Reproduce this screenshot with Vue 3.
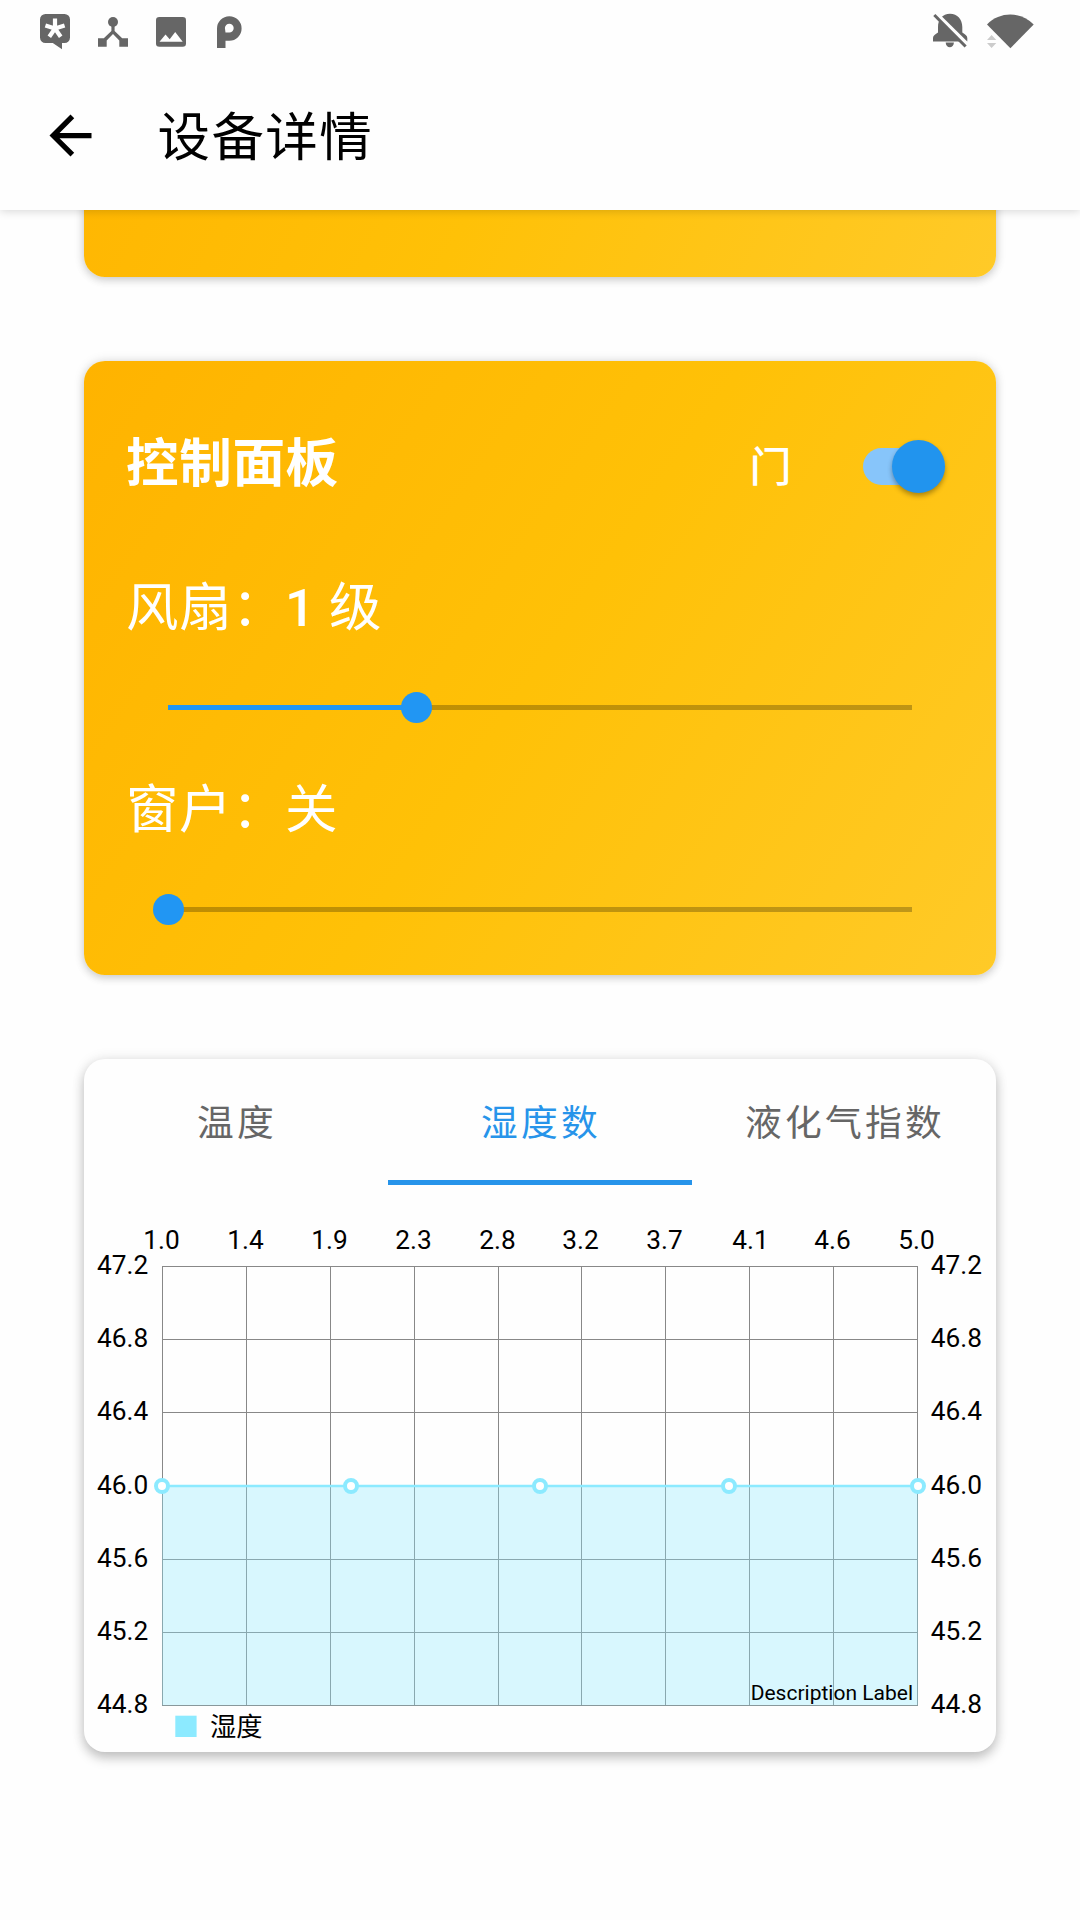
<script setup>
import { ref } from 'vue'

const tabs = ['温度', '湿度数', '液化气指数']
const activeTab = ref(1)

const sliders = [
  { name: '风扇：', num: '1', value: '级', percent: 33.333 },
  { name: '窗户：', num: '', value: '关', percent: 0 },
]

const xLabels = ['1.0', '1.4', '1.9', '2.3', '2.8', '3.2', '3.7', '4.1', '4.6', '5.0']
const yLabels = ['47.2', '46.8', '46.4', '46.0', '45.6', '45.2', '44.8']

const plot = { left: 78, top: 81, width: 756, height: 439 }
const gridX = (i) => plot.left + 84 * i + (i > 4 ? -0.5 : 0.5)
const gridY = (i) => plot.top + Math.round((plot.height / 6) * i) + 0.5
const labelX = (i) => gridX(i) - 1 + (xLabels[i] === '4.1' ? 2 : 0)
const points = [0, 1, 2, 3, 4].map((i) => plot.left + 189 * i)
</script>

<template>
  <div class="screen">
    <header class="header">
      <div class="status">
        <div class="status-left">
          <svg width="30" height="36" viewBox="40 14 30 36">
            <path d="M45.5 14h19a5.5 5.5 0 0 1 5.500 5.500v18a5.500 5.500 0 0 1-5.500 5.500H62v6.300L52.800 43H45.500a5.500 5.500 0 0 1-5.500-5.500v-18A5.500 5.500 0 0 1 45.500 14z" />
            <path class="cut" d="M55 28.500V18.500M55 28.500l9.600-3.100M55 28.500l5.700 8.200M55 28.500l-5.700 8.200M55 28.500l-9.600-3.100" />
          </svg>
          <svg width="30" height="30" viewBox="98 16.700 30 30">
            <circle cx="113" cy="21.700" r="5" />
            <path d="M98 38h5.800l7.600-7.300V25h3.200v5.700l7.600 7.300h5.800v8.500h-8.700v-6.200L113 33.800l-6.300 6.500v6.200H98z" />
          </svg>
          <svg width="30" height="30" viewBox="156 16.700 30 30">
            <rect x="156" y="16.700" width="30" height="29.700" rx="3.300" />
            <path fill="#fefefe" d="M159.500 41.500l6-7.300 4.200 4.700 5.500-7.200 7.500 9.800z" />
          </svg>
          <svg width="25" height="32" viewBox="216.500 16 25 32">
            <path fill-rule="evenodd" d="M216.500 48V28.400a12.300 12.300 0 1 1 12.300 12.400H225V48zM225 32.500h3.800a4.400 4.400 0 1 0-4.400-4.400z" />
          </svg>
        </div>
        <div class="status-right">
          <svg width="36" height="36" viewBox="932 13 36 36">
            <path d="M938 27c0-7.500 4.500-13.300 12-13.300S962.300 19.500 962.300 27v5.500c2.500 1.500 5 3 5 5.500v3.500H933V38c0-2.500 2.500-4 5-5.500zM945.700 42.500h8.200c0 6.300-8.200 6.300-8.200 0z" />
            <path stroke="#fefefe" stroke-width="4" d="M934 11.500l35 34.500" />
            <path stroke="#666" stroke-width="3" d="M934.300 15l31.300 31.500" />
          </svg>
          <svg width="47" height="35" viewBox="987 14 47 35">
            <path d="M1010.400 48.300L987 24.500c13-13.200 33.500-13.200 46.700 0z" />
            <path fill="#ccc" d="M987 40l4.600-5 4.700 5zM987 43h9.300l-4.700 5z" />
          </svg>
        </div>
      </div>
      <div class="appbar">
        <svg class="back" width="63" height="63" viewBox="0 0 24 24">
          <path d="M20 11H7.830l5.590-5.590L12 4l-8 8 8 8 1.410-1.410L7.830 13H20v-2z" />
        </svg>
        <h1 class="title">设备详情</h1>
      </div>
    </header>

    <main class="content">
      <section class="card amber previous"></section>

      <section class="card amber panel">
        <div class="panel-head">
          <h2 class="panel-title">控制面板</h2>
          <span class="door">门</span>
          <span class="switch"><span class="knob"></span></span>
        </div>
        <div v-for="s in sliders" :key="s.name" class="control">
          <div class="control-label">{{ s.name }}<b v-if="s.num">{{ s.num + ' ' }}</b>{{ s.value }}</div>
          <div class="slider">
            <span class="fill" :style="{ width: s.percent + '%' }"></span>
            <span class="thumb" :style="{ left: s.percent + '%' }"></span>
          </div>
        </div>
      </section>

      <section class="card chart-card">
        <nav class="tabs">
          <div
            v-for="(t, i) in tabs"
            :key="t"
            class="tab"
            :class="{ active: i === activeTab }"
            @click="activeTab = i"
          >{{ t }}</div>
        </nav>
        <svg class="chart" width="912" height="567" viewBox="0 0 912 567">
          <g stroke="#888" stroke-width="1">
            <line v-for="(l, i) in xLabels" :key="'x' + l" :x1="gridX(i)" :x2="gridX(i)" y1="81" y2="521" />
            <line v-for="(l, i) in yLabels" :key="'y' + l" x1="78" x2="834" :y1="gridY(i)" :y2="gridY(i)" />
          </g>
          <rect x="78" y="301" width="756" height="219.500" fill="#8ceaff" fill-opacity="0.333" />
          <line x1="78" x2="834" y1="301" y2="301" stroke="#8ceaff" stroke-width="2.600" />
          <circle v-for="p in points" :key="p" :cx="p" cy="301" r="6" fill="#fff" stroke="#8ceaff" stroke-width="4" />
          <g class="axis">
            <text v-for="(l, i) in xLabels" :key="'tx' + l" :x="labelX(i)" y="63.500" text-anchor="middle">{{ l }}</text>
            <text v-for="(l, i) in yLabels" :key="'tl' + l" x="64.300" :y="gridY(i) + 7.500" text-anchor="end">{{ l }}</text>
            <text v-for="(l, i) in yLabels" :key="'tr' + l" x="846.800" :y="gridY(i) + 7.500">{{ l }}</text>
            <text class="desc" x="829" y="515" text-anchor="end">Description Label</text>
            <text x="126" y="551">湿度</text>
          </g>
          <rect x="91.300" y="530.700" width="21.300" height="21.300" fill="#8ceaff" />
        </svg>
      </section>
    </main>
  </div>
</template>

<style>
body {
  margin: 0;
  background: #fefefe;
}
</style>

<style scoped>
.screen {
  width: 1080px;
  height: 1920px;
  overflow: hidden;
  display: flex;
  flex-direction: column;
  background: #fefefe;
  font-family: Roboto, "Noto Sans CJK SC", sans-serif;
}
.header {
  position: relative;
  z-index: 1;
  flex: none;
  height: 210px;
  background: #fefefe;
  box-shadow: 0 1px 9px rgba(0, 0, 0, 0.17);
}
.status {
  display: flex;
  justify-content: space-between;
  height: 63px;
  padding: 0 46px 0 40px;
  fill: #666;
}
.status-left {
  display: flex;
  gap: 28px;
  padding-top: 14px;
}
.status-left svg:nth-child(2),
.status-left svg:nth-child(3) {
  margin-top: 2.700px;
}
.status-left svg:nth-child(4) {
  margin: 2px 0 0 2.500px;
}
.status-right {
  display: flex;
  gap: 19px;
  padding-top: 13px;
}
.status-right svg:last-child {
  margin-top: 1px;
}
.cut {
  fill: none;
  stroke: #fefefe;
  stroke-width: 4.200;
}
.appbar {
  display: flex;
  align-items: center;
  height: 147px;
  padding-left: 39px;
}
.back {
  margin-top: -2px;
}
.title {
  margin: 3px 0 0 55.500px;
  font-size: 52.500px;
  font-weight: 400;
  line-height: 76px;
  letter-spacing: 1.400px;
  color: #000;
}
.content {
  display: flex;
  flex-direction: column;
  gap: 84px;
  padding: 0 84px;
  margin-top: -363px;
}
.card {
  flex: none;
  box-sizing: border-box;
  width: 912px;
  border-radius: 21px;
  background: #fefefe;
  box-shadow: 0 6px 12px rgba(0, 0, 0, 0.22), 0 0 14px rgba(0, 0, 0, 0.09);
}
.amber {
  background: linear-gradient(124deg, #ffb300, #ffc107 50%, #ffca28);
  box-shadow: 0 3px 9px rgba(0, 0, 0, 0.15), 0 0 12px rgba(0, 0, 0, 0.11);
  color: #fff;
}
.previous {
  height: 430px;
  background: linear-gradient(115.200deg, #ffb300, #ffc107 50%, #ffca28);
}
.panel {
  height: 614px;
  padding: 63px 84px 0 42px;
}
.panel-head {
  display: flex;
  align-items: center;
  height: 84px;
  margin-right: -33px;
}
.panel-title {
  flex: 1;
  margin: -5px 0 0;
  font-size: 52.500px;
  font-weight: 700;
  line-height: 76px;
  letter-spacing: 0.700px;
}
.door {
  width: 42px;
  margin: 3px 71.500px 0 0;
  font-size: 42px;
  font-weight: 500;
  line-height: 60px;
}
.switch {
  display: flex;
  align-items: center;
  justify-content: flex-end;
  width: 82px;
  height: 37px;
  margin-top: 1px;
  border-radius: 19px;
  background: #87c5fa;
}
.knob {
  flex: none;
  width: 53px;
  height: 53px;
  border-radius: 50%;
  background: #2194ee;
  box-shadow: 0 3px 5px rgba(0, 0, 0, 0.32);
}
.control {
  height: 202px;
}
.control-label {
  padding-top: 62px;
  font-size: 52.500px;
  line-height: 76px;
  letter-spacing: 0.500px;
  white-space: pre;
}
.control-label b {
  font-weight: 500;
}
.slider {
  position: relative;
  height: 5px;
  margin: 59px 0 0 42px;
  background: rgba(0, 0, 0, 0.25);
}
.fill {
  display: block;
  height: 5px;
  background: #2196f3;
}
.thumb {
  position: absolute;
  top: -13px;
  width: 31px;
  height: 31px;
  margin-left: -15px;
  border-radius: 50%;
  background: #2196f3;
}
.chart-card {
  height: 693px;
}
.tabs {
  display: flex;
  height: 126px;
}
.tab {
  flex: 1;
  box-sizing: border-box;
  border-bottom: 5px solid transparent;
  padding-left: 2px;
  font-size: 36.750px;
  line-height: 129px;
  letter-spacing: 3.200px;
  text-align: center;
  color: #666;
}
.tab.active {
  border-color: #2794ea;
  color: #2794ea;
}
.chart {
  display: block;
}
.axis {
  font-size: 26.250px;
  fill: #000;
}
.desc {
  font-size: 21px;
}
</style>
